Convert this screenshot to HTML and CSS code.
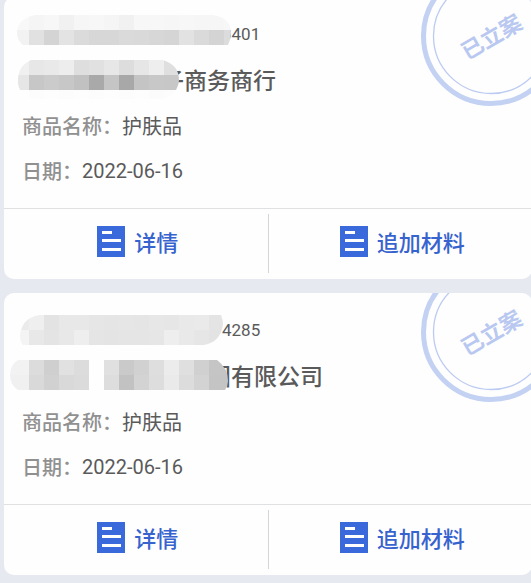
FILE: index.html
```
<!DOCTYPE html>
<html lang="zh-CN">
<head>
  <meta charset="UTF-8">
  <meta name="viewport" content="width=device-width, initial-scale=1">
  <title>案件列表</title>
  <link rel="stylesheet" href="styles.css">
</head>
<body>
  <svg class="defs" aria-hidden="true">
    <symbol id="icon-doc" viewBox="0 0 28 31">
      <path fill="#3a69dc" d="M0 0h28v31H0z"/>
      <path fill="#fff" d="M5 5h10v3H5zM5 13h19v3H5zM5 22h19v3H5z"/>
    </symbol>
    <symbol id="stamp" viewBox="0 0 140 140">
      <circle cx="70" cy="70" r="67.5" fill="none" stroke="#c3d1f3" stroke-width="5"/>
      <circle cx="70" cy="70" r="57.5" fill="none" stroke="#bccbf1" stroke-width="1.3"/>
      <text class="stamp-text" x="70" y="79" text-anchor="middle" transform="rotate(-30 70 70)">已立案</text>
    </symbol>
  </svg>

  <main class="list">
    <article class="card">
      <svg class="stamp" role="img" aria-label="已立案"><use href="#stamp"/></svg>
      <div class="info">
        <div class="row number">
          <svg class="mask" width="222" height="45" data-mask="number1"></svg>
          <span class="tail">0401</span>
        </div>
        <h2 class="row name">
          <svg class="mask" width="170" height="45" data-mask="name1"></svg>
          <span class="tail">子商务商行</span>
        </h2>
        <div class="row"><span class="label">商品名称：</span><span>护肤品</span></div>
        <div class="row"><span class="label">日期：</span><span>2022-06-16</span></div>
      </div>
      <div class="actions">
        <button type="button"><svg class="icon"><use href="#icon-doc"/></svg><span>详情</span></button>
        <button type="button"><svg class="icon"><use href="#icon-doc"/></svg><span>追加材料</span></button>
      </div>
    </article>

    <article class="card">
      <svg class="stamp" role="img" aria-label="已立案"><use href="#stamp"/></svg>
      <div class="info">
        <div class="row number">
          <svg class="mask" width="222" height="45" data-mask="number2"></svg>
          <span class="tail">4285</span>
        </div>
        <h2 class="row name">
          <svg class="mask" width="217" height="45" data-mask="name2"></svg>
          <span class="tail">国有限公司</span>
        </h2>
        <div class="row"><span class="label">商品名称：</span><span>护肤品</span></div>
        <div class="row"><span class="label">日期：</span><span>2022-06-16</span></div>
      </div>
      <div class="actions">
        <button type="button"><svg class="icon"><use href="#icon-doc"/></svg><span>详情</span></button>
        <button type="button"><svg class="icon"><use href="#icon-doc"/></svg><span>追加材料</span></button>
      </div>
    </article>
  </main>

  <script src="mask.js"></script>
</body>
</html>
```
FILE: styles.css
```
* {
  box-sizing: border-box;
}
body {
  margin: 0;
  overflow-x: hidden;
  background-color: #e6eaf0;
  color: #5a5a5a;
  font-family: Roboto, "Noto Sans CJK SC", sans-serif;
  font-size: 20px;
}
.defs {
  position: absolute;
  width: 0;
  height: 0;
}
.list {
  display: flex;
  flex-direction: column;
  gap: 14px;
  margin: -3px -1px 8px 4px;
}
.card {
  position: relative;
  overflow: hidden;
  border-radius: 10px;
  background: #fefefe;
}
.stamp {
  position: absolute;
  top: -31px;
  right: -29px;
  width: 140px;
  height: 140px;
}
.stamp-text {
  fill: #b9c8f0;
  font-size: 22px;
  font-weight: bold;
}
.info {
  padding: 16px 18px 15px;
}
.row {
  display: flex;
  align-items: center;
  height: 45px;
  margin: 0;
  white-space: nowrap;
}
.label {
  color: #909090;
  font-weight: 500;
}
.number {
  font-size: 17px;
}
.name {
  font-size: 23px;
  font-weight: 500;
}
/* the pixelated part starts left of the text and covers its first character */
.mask {
  position: relative;
  z-index: 1;
  flex: none;
  margin-left: -13px;
  overflow: visible;
}
.tail {
  padding-bottom: 3px;
}
.number .tail {
  margin-left: -9px;
}
.name .tail {
  margin-left: -18px;
}
.actions {
  display: flex;
  height: 71px;
  border-top: 1px solid #dfe1e3;
}
.actions button {
  display: flex;
  flex: 1;
  align-items: center;
  justify-content: center;
  gap: 9px;
  margin: 5px 0 6px;
  padding: 0 0 4px 4px;
  border: none;
  background: none;
  color: #3763cf;
  font-family: inherit;
  font-size: 22px;
  font-weight: 500;
  cursor: pointer;
}
.actions button + button {
  border-left: 1px solid #d3d5d8;
}
.actions span {
  padding-bottom: 2px;
}
.icon {
  width: 28px;
  height: 31px;
}
```
FILE: mask.js
```
const CELL = 15;

// each row lists the grey level of its cells, from left to right
const masks = {
  number1: {
    top: 2,
    shape: 'M26 2H204Q222 5 222 20Q222 26 219 32H14Q8 27 8 20Q8 6 26 2Z',
    rows: [
      'f8 f5 f7 f1 f6 f7 f5 f1 f7 f7 f6 f7 f6 f6 f7',
      'f2 e1 d4 e3 db d7 d7 da d9 d7 d5 e2 da d4 dc'
    ]
  },
  name1: {
    top: 2,
    shape: 'M22 2H154Q170 7 170 22Q170 26 167 32Q162 41 150 41H28Q8 38 9 22Q9 8 22 2Z',
    rows: [
      'f0 e7 e9 ed de e1 e7 dd e6 ee df',
      'e6 c7 cb c7 c1 a9 c5 a8 c4 c8 c7',
      'fe fc fd fc fd fc fd fc fd fb fc'
    ]
  },
  number2: {
    top: 6,
    shape: 'M30 6H212Q214 11 214 15Q212 33 195 36H14Q11 33 11 26Q13 9 30 6Z',
    rows: [
      'eb ef e3 e8 e8 e6 e5 e6 e5 e7 e6 e9 ea e4 e8',
      'f4 e8 e4 e8 ee e5 e4 e5 e5 e6 ee e9 e6 e3 ee'
    ]
  },
  name2: {
    top: 6,
    shape: 'M9 6H208Q219 14 219 27Q219 32 216 36H9Q1 31 1 21Q1 11 9 6Z',
    rows: [
      'f2 dc cf e1 dc fe e0 ca d1 de ec df d0 c5 c5',
      'f0 d9 d1 d9 db fe dd c2 d3 dd ea dc d3 c4 c4'
    ]
  }
};

document.querySelectorAll('[data-mask]').forEach(svg => {
  const id = svg.dataset.mask;
  const mask = masks[id];
  let cells = '';

  mask.rows.forEach((row, r) => {
    row.split(' ').forEach((level, c) => {
      // the first cell also fills the margin left of the grid
      const x = c === 0 ? 0 : 5 + c * CELL;
      const width = c === 0 ? CELL + 5 : CELL;
      cells += `<rect x="${x}" y="${mask.top + r * CELL}" width="${width}" height="${CELL}" fill="#${level.repeat(3)}"/>`;
    });
  });

  svg.innerHTML = `<clipPath id="clip-${id}"><path d="${mask.shape}"/></clipPath><g clip-path="url(#clip-${id})">${cells}</g>`;
});
```
